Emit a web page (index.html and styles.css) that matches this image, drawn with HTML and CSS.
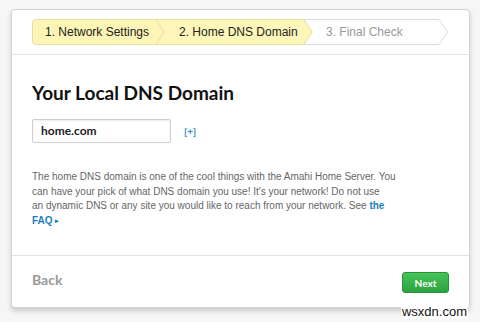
FILE: index.html
```html
<!DOCTYPE html>
<html lang="en">

<head>
    <meta charset="UTF-8">
    <title>Amahi Setup</title>
    <link rel="stylesheet" href="styles.css">
</head>

<body>
    <div class="card">
        <div class="card-header">
            <div class="steps">
                <svg class="steps-bg" width="418" height="26" viewBox="0 0 418 26">
                    <!-- step 3 -->
                    <path d="M270 0.5 H407 L415.5 13 L407 25.5 H270 Z" fill="#fff" stroke="#dcdcdc" />
                    <!-- step 2 -->
                    <path d="M122 0.5 H272 L280.5 13 L272 25.5 H122 Z" fill="#fdf6b8" stroke="#e8df9c" />
                    <!-- step 1 -->
                    <path d="M3.5 0.5 H124 L132.5 13 L124 25.5 H3.5 Q0.5 25.5 0.5 22.5 V3.5 Q0.5 0.5 3.5 0.5 Z"
                        fill="#fcf5b6" stroke="#e8df9c" />
                </svg>
                <span class="step step-1">1. Network Settings</span>
                <span class="step step-2">2. Home DNS Domain</span>
                <span class="step step-3">3. Final Check</span>
            </div>
        </div>
        <div class="card-body">
            <h1>Your Local DNS Domain</h1>
            <div class="domain-row">
                <div class="domain-input">home.com</div>
                <a href="#" class="add-link">[+]</a>
            </div>
            <p class="help">
                The home DNS domain is one of the cool things with the Amahi Home Server. You<br>
                can have your pick of what DNS domain you use! It's your network! Do not use<br>
                an dynamic DNS or any site you would like to reach from your network. See <a href="#">the<br>
                FAQ&nbsp;<span class="caret">&#9656;</span></a>
            </p>
        </div>
        <div class="card-footer">
            <span class="back">Back</span>
            <button class="next">Next</button>
        </div>
    </div>
    <div class="watermark">wsxdn.com</div>
</body>

</html>
```

FILE: styles.css
```css
body {
    margin: 0;
    background-color: #f6f6f6;
    font-family: "Liberation Sans", Arial, sans-serif;
    width: 480px;
    height: 322px;
    position: relative;
    overflow: hidden;
}

.card {
    margin: 9px 0 0 11px;
    width: 457px;
    height: 297px;
    background-color: #fff;
    border: 1px solid #d4d4d4;
    border-radius: 4px;
    box-shadow: 0 3px 5px rgba(0, 0, 0, 0.18);
    display: flex;
    flex-direction: column;
}

.card-header {
    padding: 9px 0 9px 20px;
    border-bottom: 1px solid #e2e2e2;
}

/* breadcrumb steps */
.steps {
    position: relative;
    display: flex;
    height: 26px;
    width: 418px;
}

.steps-bg {
    position: absolute;
    top: 0;
    left: 0;
}

.step {
    position: relative;
    font-size: 12px;
    line-height: 26px;
    color: #222;
}

.step-1 {
    padding-left: 13px;
    width: 134px;
}

.step-2 {
    width: 147px;
}

.step-3 {
    color: #999;
}

.card-body {
    flex: 1;
    padding: 0 20px;
}

h1 {
    font-family: Lato, "Liberation Sans", sans-serif;
    font-weight: 700;
    font-size: 19px;
    color: #111;
    margin: 26px 0 14px;
    line-height: 24px;
}

.domain-row {
    display: flex;
    align-items: center;
    gap: 13px;
}

.domain-input {
    width: 129px;
    height: 22px;
    border: 1px solid #cfcfcf;
    border-radius: 2px;
    padding-left: 8px;
    font-family: Lato, "Liberation Sans", sans-serif;
    font-weight: 700;
    font-size: 12px;
    line-height: 22px;
    color: #222;
    box-shadow: inset 0 1px 2px rgba(0, 0, 0, 0.08);
}

.add-link {
    font-family: Lato, "Liberation Sans", sans-serif;
    font-weight: 700;
    font-size: 10px;
    color: #2a8fc4;
    text-decoration: none;
}

.help {
    margin: 27px 0 0;
    font-size: 10px;
    line-height: 14.5px;
    color: #666;
    white-space: nowrap;
}

.help a {
    color: #1b7fbf;
    font-weight: 700;
    text-decoration: none;
}

.caret {
    font-size: 7px;
    vertical-align: 1px;
}

.card-footer {
    height: 51px;
    border-top: 1px solid #e2e2e2;
    padding: 0 20px;
    display: flex;
    align-items: center;
    justify-content: space-between;
}

.back {
    font-family: Lato, "Liberation Sans", sans-serif;
    font-weight: 700;
    font-size: 14px;
    color: #999;
    margin-top: -4px;
}

.next {
    width: 47px;
    height: 21px;
    margin-top: 2px;
    border: 1px solid #26923a;
    border-radius: 3px;
    background: linear-gradient(#47c35a, #2ca23f);
    color: #fff;
    font-family: Lato, "Liberation Sans", sans-serif;
    font-weight: 700;
    font-size: 10px;
    padding: 0;
    cursor: pointer;
}

.watermark {
    position: absolute;
    right: 12px;
    bottom: 3px;
    font-family: "Liberation Sans", Arial, sans-serif;
    font-size: 13px;
    color: #111;
    background-color: #fff;
    padding: 0 1px;
    line-height: 14px;
}
```
